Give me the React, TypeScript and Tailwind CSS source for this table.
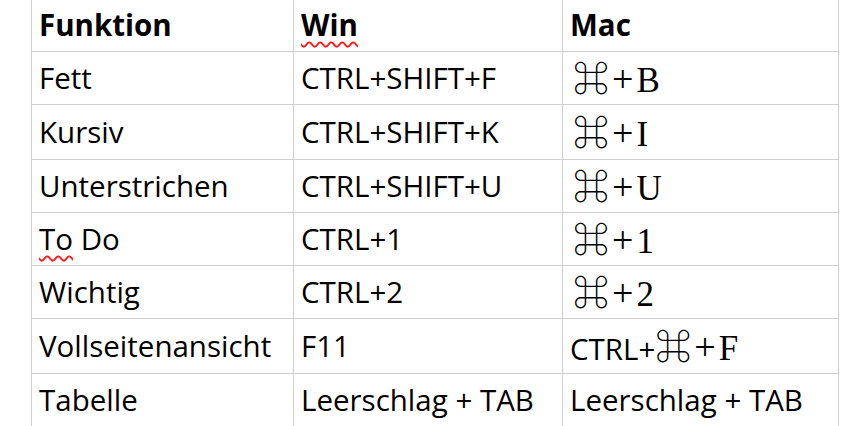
import React from 'react';

type Row = {
  name: React.ReactNode;
  win: string;
  mac: React.ReactNode;
  h: string;
};

function Cmd({ k, first = true }: { k: string; first?: boolean }) {
  return (
    <span className={first ? 'ml-[3px]' : ''}>
      <span className="font-[family-name:'Noto_Sans_CJK_JP','DejaVu_Sans',sans-serif] text-[36px] font-light">⌘</span>
      <span className="font-[family-name:'Liberation_Serif',serif] text-[35px]">
        <span className="mx-[3px] text-[38px]">+</span>
        {k}
      </span>
    </span>
  );
}

const squiggle = 'underline decoration-wavy decoration-[#ff1a1a] decoration-[1.5px] underline-offset-[5px]';

const rows: Row[] = [
  { name: 'Fett', win: 'CTRL+SHIFT+F', mac: <Cmd k="B" />, h: 'h-[53px]' },
  { name: 'Kursiv', win: 'CTRL+SHIFT+K', mac: <Cmd k="I" />, h: 'h-[55px]' },
  { name: 'Unterstrichen', win: 'CTRL+SHIFT+U', mac: <Cmd k="U" />, h: 'h-[53px]' },
  {
    name: (
      <>
        <span className={squiggle}>To</span> Do
      </>
    ),
    win: 'CTRL+1',
    mac: <Cmd k="1" />,
    h: 'h-[53px]'
  },
  { name: 'Wichtig', win: 'CTRL+2', mac: <Cmd k="2" />, h: 'h-[53px]' },
  {
    name: 'Vollseitenansicht',
    win: 'F11',
    mac: (
      <>
        CTRL+
        <Cmd k="F" first={false} />
      </>
    ),
    h: 'h-[55px]'
  },
  { name: 'Tabelle', win: 'Leerschlag + TAB', mac: 'Leerschlag + TAB', h: 'h-[53px]' }
];

const cell = 'border border-[#cfcfcf] pl-[7px] pr-[4px] align-middle whitespace-nowrap';

export default function App() {
  return (
    <div className="w-[868px] h-[426px] overflow-hidden bg-white">
      <table className="-mt-[2px] ml-[31px] table-fixed border-collapse font-[family-name:'Open_Sans',sans-serif] text-[29.5px] text-black leading-none">
        <colgroup>
          <col className="w-[262px]" />
          <col className="w-[269px]" />
          <col className="w-[276px]" />
        </colgroup>
        <thead>
          <tr className="h-[53px]">
            <th className={`${cell} text-left font-bold`}>Funktion</th>
            <th className={`${cell} text-left font-bold`}>
              <span className={squiggle}>Win</span>
            </th>
            <th className={`${cell} text-left font-bold`}>Mac</th>
          </tr>
        </thead>
        <tbody>
          {rows.map((r, idx) => (
            <tr key={idx} className={r.h}>
              <td className={cell}>{r.name}</td>
              <td className={cell}>{r.win}</td>
              <td className={cell}>{r.mac}</td>
            </tr>
          ))}
        </tbody>
      </table>
    </div>
  );
}
